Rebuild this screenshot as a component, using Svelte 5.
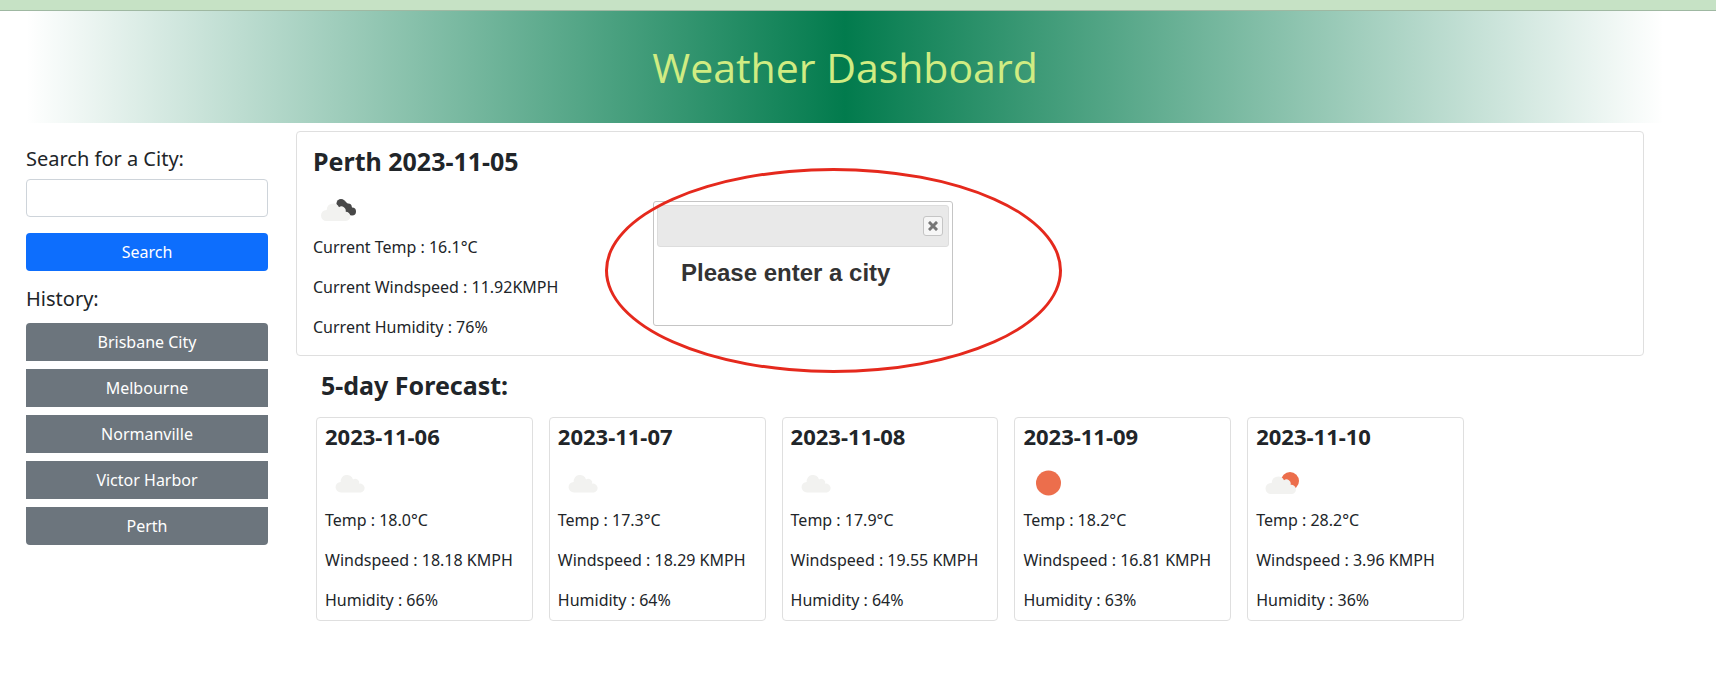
<script>
  let city = $state('');
  const history = ['Brisbane City', 'Melbourne', 'Normanville', 'Victor Harbor', 'Perth'];
  const forecast = [
    { date: '2023-11-06', icon: 'cloud', temp: '18.0', wind: '18.18', humidity: 66 },
    { date: '2023-11-07', icon: 'cloud', temp: '17.3', wind: '18.29', humidity: 64 },
    { date: '2023-11-08', icon: 'cloud', temp: '17.9', wind: '19.55', humidity: 64 },
    { date: '2023-11-09', icon: 'sun', temp: '18.2', wind: '16.81', humidity: 63 },
    { date: '2023-11-10', icon: 'partly', temp: '28.2', wind: '3.96', humidity: 36 }
  ];
</script>

{#snippet weather(kind)}
  <svg class="weather" viewBox="0 0 50 50" aria-hidden="true">
    {#if kind === 'sun'}
      <circle cx="24.5" cy="25" r="12.5" fill="#ec6e4c" />
    {:else if kind === 'cloud'}
      <path fill="#f2f2f0" d="M15 34.5a5.3 5.3 0 0 1-.3-10.6A6.3 6.3 0 0 1 27 21.4a4.2 4.2 0 0 1 6.3 4.3A4.4 4.4 0 0 1 35 34.5Z" />
    {:else if kind === 'partly'}
      <circle cx="33" cy="23" r="9" fill="#ec6e4c" />
      <path fill="#f2f2f0" d="M14 36a5.500 5.500 0 0 1 0-11h.7A6.500 6.500 0 0 1 27 22.200a4.300 4.300 0 0 1 6.600 4.600A4.600 4.600 0 0 1 35 36Z" />
    {:else}
      <g fill="#484848"><circle cx="27" cy="18.500" r="4.500" /><circle cx="34" cy="22.500" r="3.900" /><circle cx="38" cy="26.500" r="4" /><path d="m25 22 6-6 8 8-3 6Z" /></g>
      <path fill="#f2f2f0" d="M12.500 36a5.500 5.500 0 0 1 0-11h.2A6.500 6.500 0 0 1 25 22.200a4.300 4.300 0 0 1 6.600 4.600A4.600 4.600 0 0 1 32 36Z" />
    {/if}
  </svg>
{/snippet}

<div class="strip"></div>
<header><h1>Weather Dashboard</h1></header>
<div class="layout">
  <aside>
    <form onsubmit={(e) => e.preventDefault()}>
      <label for="city">Search for a City:</label>
      <input id="city" type="text" bind:value={city} />
      <button class="search" type="submit">Search</button>
    </form>
    <h2>History:</h2>
    <div class="history">
      {#each history as name}<button type="button">{name}</button>{/each}
    </div>
  </aside>
  <main>
    <section class="current">
      <h3>Perth 2023-11-05</h3>
      {@render weather('broken')}
      <p>Current Temp : 16.1°C</p>
      <p>Current Windspeed : 11.92KMPH</p>
      <p>Current Humidity : 76%</p>
      <div class="dialog" role="dialog" aria-labelledby="message">
        <div class="titlebar">
          <button type="button" aria-label="Close">
            <svg viewBox="0 0 10 10" aria-hidden="true"><path d="M2 2l6 6M8 2L2 8" stroke="#777" stroke-width="3" stroke-linecap="square" /></svg>
          </button>
        </div>
        <p id="message">Please enter a city</p>
        <div class="ring"></div>
      </div>
    </section>
    <h3 class="title">5-day Forecast:</h3>
    <div class="days">
      {#each forecast as day}
        <article>
          <h4>{day.date}</h4>
          {@render weather(day.icon)}
          <p>Temp : {day.temp}°C</p>
          <p>Windspeed : {day.wind} KMPH</p>
          <p>Humidity : {day.humidity}%</p>
        </article>
      {/each}
    </div>
  </main>
</div>

<style>
  :global(body) { background: #fff; color: #212529; font: 16px/24px "Noto Sans", "Open Sans", sans-serif; }
  :global(*) { box-sizing: border-box; }
  h1, h2, h3, h4, p { margin: 0; }
  button, input { font: inherit; }
  .strip { height: 11px; background: #c6e2c5; border-bottom: 1px solid #9fb8a2; }
  header { margin: 0 52px 0 26px; padding: 32px 0; background: linear-gradient(to right, transparent, #027b4d, transparent); text-align: center; }
  h1 { font-family: "Open Sans", sans-serif; font-size: 41px; line-height: 48px; font-weight: 400; color: #d0ec82; }
  .layout { display: flex; gap: 28px; padding: 8px 72px 0 26px; }
  aside { flex: 0 0 242px; padding-top: 16px; }
  form { display: flex; flex-direction: column; }
  label, h2 { font-size: 20px; line-height: 24px; font-weight: 400; }
  label { margin-bottom: 8px; }
  input { width: 100%; height: 38px; padding: 6px 12px; border: 1px solid #ced4da; border-radius: 4px; background: #fff; }
  button { cursor: pointer; }
  .search, .history button { width: 100%; height: 38px; border: 0; color: #fff; padding: 0; }
  .search { margin: 16px 0; border-radius: 4px; background: #0d6efd; }
  .history { display: flex; flex-direction: column; gap: 8px; margin-top: 12px; border-radius: 4px; overflow: hidden; }
  .history button { background: #6c757d; }
  main { flex: 1; min-width: 0; }
  .current { position: relative; padding: 16px; border: 1px solid #dfdfdf; border-radius: 4px; }
  h3 { font-size: 25px; line-height: 27px; font-weight: 700; margin-bottom: 10px; }
  h4 { font-size: 22px; line-height: 20px; font-weight: 700; margin-bottom: 12px; }
  p + p { margin-top: 16px; }
  .weather { display: block; width: 50px; height: 50px; margin-left: 1px; }
  .title { margin: 16px 0 18px 25px; }
  .days { display: grid; grid-template-columns: repeat(5, minmax(0, 1fr)); gap: 16px; margin: 0 180px 0 20px; }
  article { padding: 8px; border: 1px solid #dfdfdf; border-radius: 4px; white-space: nowrap; }
  .dialog { position: absolute; left: 356px; top: 69px; width: 300px; height: 125px; padding: 3px; border: 1px solid #c5c5c5; border-radius: 3px; background: #fff; color: #333; font-family: "Liberation Sans", Arial, sans-serif; }
  .titlebar { display: flex; align-items: center; justify-content: flex-end; height: 42px; padding-right: 5px; border: 1px solid #ddd; border-radius: 3px; background: #e9e9e9; }
  .titlebar button { display: grid; place-items: center; width: 20px; height: 20px; padding: 0; border: 1px solid #c5c5c5; border-radius: 3px; background: #f6f6f6; }
  .titlebar svg { width: 10px; height: 10px; }
  #message { padding: 11px 24px; font-size: 24px; line-height: 29px; font-weight: 700; }
  .ring { position: absolute; left: -49px; top: -34px; width: 457px; height: 205px; border: 3px solid #e5291d; border-radius: 50%; pointer-events: none; }
</style>
